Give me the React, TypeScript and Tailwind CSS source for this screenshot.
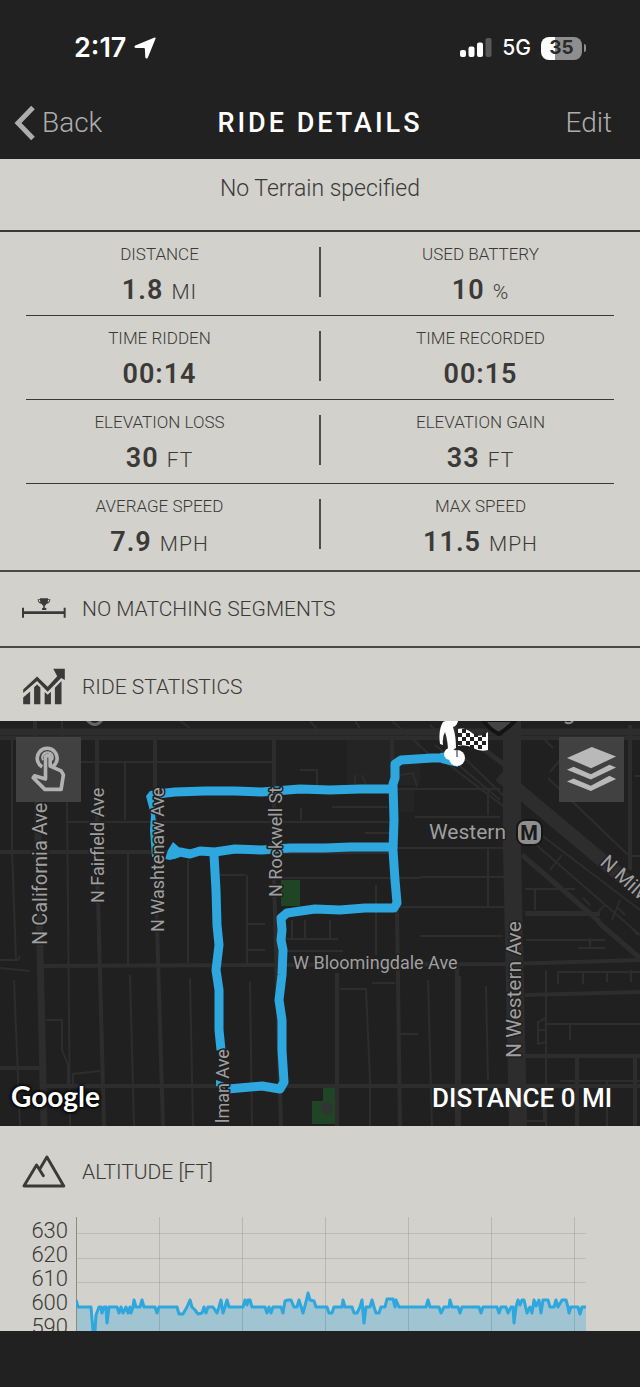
import React from "react";

type Stat = {
  label: string;
  value: string;
  unit?: string;
};

const statRows: Stat[][] = [
  [
    { label: "DISTANCE", value: "1.8", unit: "MI" },
    { label: "USED BATTERY", value: "10", unit: "%" },
  ],
  [
    { label: "TIME RIDDEN", value: "00:14" },
    { label: "TIME RECORDED", value: "00:15" },
  ],
  [
    { label: "ELEVATION LOSS", value: "30", unit: "FT" },
    { label: "ELEVATION GAIN", value: "33", unit: "FT" },
  ],
  [
    { label: "AVERAGE SPEED", value: "7.9", unit: "MPH" },
    { label: "MAX SPEED", value: "11.5", unit: "MPH" },
  ],
];

const altitudeTicks = [630, 620, 610, 600, 590];

const altitudeLine =
  "76,1300 78,1307 91,1307 93,1331 95,1331 96,1315 99,1307 101,1307 102,1313 104,1307 106,1307 107,1323 109,1307 117,1307 119,1313 121,1307 123,1313 126,1307 128,1313 130,1307 131,1313 133,1307 134,1300 136,1307 140,1307 142,1300 144,1307 155,1307 157,1313 159,1307 177,1307 179,1314 183,1314 187,1307 190,1300 192,1307 195,1310 198,1314 202,1313 204,1307 206,1313 208,1307 213,1307 217,1313 219,1307 221,1300 223,1313 225,1307 227,1300 229,1307 243,1307 245,1300 247,1305 248,1300 250,1300 252,1307 265,1307 267,1313 269,1307 271,1313 273,1307 281,1307 283,1313 285,1301 288,1300 291,1300 294,1307 297,1307 299,1300 303,1313 306,1302 308,1293 310,1300 314,1301 316,1307 327,1307 329,1313 332,1313 334,1307 342,1307 343,1300 345,1307 352,1307 354,1313 357,1313 360,1307 362,1300 364,1323 366,1307 370,1307 372,1300 374,1307 376,1313 379,1313 381,1307 385,1307 387,1299 393,1299 395,1307 396,1300 399,1307 426,1307 428,1300 430,1307 439,1307 441,1313 444,1307 449,1307 450,1300 452,1307 458,1307 460,1313 462,1307 479,1307 481,1313 483,1307 497,1307 499,1313 501,1307 506,1307 508,1313 511,1307 513,1307 514,1323 516,1307 518,1300 520,1305 522,1300 524,1300 527,1313 530,1307 532,1313 534,1300 536,1306 539,1300 541,1313 543,1300 548,1300 550,1307 554,1307 556,1300 558,1307 562,1300 566,1300 568,1307 569,1313 571,1307 578,1307 580,1314 582,1307 586,1307";

const minorRoads = [
  "M12 738V850L16 960M14 980L20 1126M62 721V736M67 800L70 1126M125 761V820M68 822H390M80 762H272M128 852V965M130 975L134 1126M188 860V963M190 978L193 1126M0 960H18L20 956M0 968L30 971M46 1020H62V1050L68 1065V1085M73 1088V1074L100 1071",
  "M247 875V965M250 982L252 1126M212 875H245M280 878H420M248 924H265M248 950H265M292 920V938M305 920V938M330 920V938M280 939H338M285 951H343M300 770H317V785M301 808V820M332 807H388M365 833H390M376 885V955M460 976V1126M340 989H366L370 1080V1126M372 983H395M400 1034H418M428 980L432 1126M486 986L488 1080M420 936H503",
  "M395 789H500M415 817H500M395 848H505M420 877H505M488 790V815M488 848V906M395 907H505M525 889H575M525 912H590M535 890V910M526 940H605M578 948H605M590 938V947M546 970V1126M558 984V972H640M583 972V984M607 972V982M631 970V982M547 1024H640M570 1025V1040M546 1018L538 1022V1044L546 1042M538 1030H546M560 1081H640M607 1082V1126M526 1121H544V1085",
  "M540 735L553 748M550 772L560 760M548 778L628 855M435 745L500 800M430 725L508 800M440 758L640 910M525 835L640 935M550 870L562 855M590 905L583 898M612 920L620 900M625 915L618 908M638 935L632 928M605 905L598 912M640 856H630M635 776H640M400 775L413 773L417 787M355 775V784M362 775L366 785M392 721L430 755M310 721L318 730M355 721L360 728M180 721L190 728",
];

const midRoads = [
  "M0 852H390M40 966L505 964L640 960M0 1068H40M45 1086H640M97 738V860L104 1126M155 738V860L163 1126M274 738V880L281 1126M337 973V1126M392 738V780M397 910L400 1126M457 963V1126M525 995L640 992M525 1056H640M577 1056V1126M635 1056V1126M525 914H600M630 725V870M0 738H640M35 721V736",
];

const routes = [
  "M157 794L175 792L205 791L235 791L262 792L300 789L330 790L360 789H392",
  "M460 758L432 758L401 760L395 764L395 778L393 784L394 820L393 850L395 880L397 903L394 908L365 908L340 910L315 909L287 913L281 918L282 930L281 940L283 950L282 975L279 1000L282 1020V1050L284 1082L280 1089L262 1086L228 1089",
  "M172 855L180 852L190 854L200 851L215 852L235 849L262 850L290 848L325 848L350 847H392",
  "M214 855L216 890L217 925L219 945L216 970L219 990L219 1030L221 1050",
];

const roadLabels = [
  { text: "N California Ave", x: 47, y: 945, size: 20, rotate: -90 },
  { text: "N Fairfield Ave", x: 104, y: 903, size: 18, rotate: -90 },
  { text: "N Washtenaw Ave", x: 164, y: 932, size: 18, rotate: -90 },
  { text: "N Rockwell St", x: 282, y: 897, size: 18, rotate: -90 },
  { text: "lman Ave", x: 229, y: 1123, size: 18, rotate: -90 },
  { text: "N Western Ave", x: 521, y: 1058, size: 21, rotate: -90 },
  { text: "N Milwaukee Ave", x: 599, y: 864, size: 20, rotate: 42 },
  { text: "W Bloomingdale Ave", x: 293, y: 969, size: 18, rotate: 0 },
  { text: "Western", x: 429, y: 839, size: 21, rotate: 0 },
];

const StatusBar = () => {
  return (
    <div className="flex h-[96px] items-center justify-between pl-[74px] pr-[54px] font-['Inter',sans-serif] text-white">
      <div className="flex items-center gap-2">
        <span className="text-[27px] font-semibold leading-8">2:17</span>
        <svg viewBox="0 0 22 22" className="h-[22px] w-[22px]" fill="currentColor">
          <path d="M20 0.800Q22.200 0 21.400 2L13.800 20.700Q12.600 22.600 11.300 20.500L10.900 12Q10.800 11.200 10 11.100L1.600 10.900Q-0.800 10 1.300 8.600Z" />
        </svg>
      </div>
      <div className="flex items-center gap-2.5">
        <svg viewBox="0 0 32 20" className="h-5 w-8" fill="currentColor">
          <rect x="0" y="12" width="6" height="7" rx="2" />
          <rect x="8.500" y="8.500" width="6" height="10.500" rx="2" />
          <rect x="17" y="4.500" width="6" height="14.500" rx="2" />
          <rect x="25.500" y="0" width="6" height="19" rx="2" opacity="0.250" />
        </svg>
        <span className="text-[21px] font-medium leading-6">5G</span>
        <div className="flex items-center gap-0.5">
          <div className="flex h-[23px] w-[41px] items-center justify-center rounded-lg bg-linear-to-r from-white from-35% to-[#8e8e8e] to-35% text-[19px] font-bold leading-5 text-[#2a2a2a]">
            35
          </div>
          <span className="h-2 w-0.5 rounded-r bg-[#8e8e8e]" />
        </div>
      </div>
    </div>
  );
};

const StatCell = ({ label, value, unit }: Stat) => {
  return (
    <div className="flex flex-1 flex-col items-center pt-2.5">
      <dt className="text-[17px] font-light leading-6">{label}</dt>
      <dd className="mt-2 flex items-baseline gap-2 leading-8">
        <span className="text-[27px] font-semibold tracking-[1px]">{value}</span>
        {unit && <span className="text-[21px] font-light tracking-[1px]">{unit}</span>}
      </dd>
    </div>
  );
};

const SegmentIcon = () => (
  <svg viewBox="66 109 132 66" className="h-[22px] w-11" fill="currentColor">
    <path d="M66 138H72V149H191V138H197V168H191V157H72V168H66Z" />
    <path
      d="M120 110H144V113H151Q151 125 140 126Q137 131 134.500 132V138L139 140V145H126V140L130 138V132Q127 131 124 126Q113 125 113 113H120ZM116 115Q116 121 121 122L120 115ZM148 115H144L143 122Q148 121 148 115Z"
      fillRule="evenodd"
    />
  </svg>
);

const StatisticsIcon = () => (
  <svg viewBox="66 322 132 112" className="h-[37px] w-11" fill="currentColor">
    <path d="M69 398V387L111 348L143 379L172 347L160 324H195V358L184 352L143 394L111 361Z" />
    <path d="M69 411L90 393V432H69ZM102 380L111 372L121 381V432H102ZM134 395L143 403L153 394V432H134ZM165 382L185 361V432H165Z" />
  </svg>
);

const MountainIcon = () => (
  <svg
    viewBox="64 104 136 102"
    className="h-[33px] w-11"
    fill="none"
    stroke="currentColor"
    strokeWidth="9"
    strokeLinecap="round"
    strokeLinejoin="round"
  >
    <path d="M119 147L141 110L193 200H70L109 135L130 168" />
  </svg>
);

const SectionTitle = ({ icon, title }: { icon: React.ReactNode; title: string }) => {
  return (
    <>
      <span className="flex w-11 items-center justify-center">{icon}</span>
      <h2 className="text-[21px] font-light leading-8">{title}</h2>
    </>
  );
};

const RideMap = () => {
  return (
    <section className="relative w-full overflow-hidden bg-[#202020]">
      <svg viewBox="0 721 640 405" className="block w-full font-['Roboto',sans-serif]">
        {/* Parks */}
        <path d="M281 880H300V906H281ZM312 1101H323V1088H338V1124H312Z" fill="#1f4526" />
        <circle cx="327" cy="1108" r="6" fill="#333333" />

        {/* Roads */}
        <path d="M347 738H420V785H347ZM393 790H414V812H393Z" fill="#242424" />
        <g fill="none" stroke="#2d2d2d">
          {minorRoads.map((d) => (
            <path key={d} d={d} strokeWidth="2" />
          ))}
          {midRoads.map((d) => (
            <path key={d} d={d} strokeWidth="4" />
          ))}
          <path d="M0 732H640" strokeWidth="7" />
          <path d="M38 800V860L44 1126" strokeWidth="7" />
          <path d="M512 721V850L518 1126" strokeWidth="18" />
          <path d="M500 775L640 892" strokeWidth="14" />
          <path d="M450 725L505 765M522 855L600 922M598 922L640 958" strokeWidth="5" />
        </g>

        <path d="M483 720H516Q508 728 499 734Q490 730 483 720Z" fill="#444444" stroke="#141414" strokeWidth="4" />
        <path d="M87 720Q95 729 102 720" fill="none" stroke="#666666" strokeWidth="3" />
        <path d="M565 722Q569 725 573 721" fill="none" stroke="#8b8b8b" strokeWidth="2" />

        {/* Ridden route */}
        <g fill="none" stroke="#2da7de" strokeWidth="9" strokeLinejoin="round">
          {routes.map((d) => (
            <path key={d} d={d} />
          ))}
        </g>
        <path
          d="M146 796L150 791L163 789V798L154 800L155 815L157 830L156 845L158 857H152L150 830L151 815ZM165 859L168 850L173 842L181 849L180 857L170 860ZM216 1080L225 1083V1089L216 1086ZM440 753L458 751V767L441 763Z"
          fill="#2da7de"
        />

        {roadLabels.map(({ text, x, y, size, rotate }) => (
          <text
            key={text}
            x={x}
            y={y}
            fontSize={size}
            transform={`rotate(${rotate} ${x} ${y})`}
            fill="#9f9f9f"
            stroke="#202020"
            strokeWidth="3"
            strokeLinejoin="round"
            paintOrder="stroke"
          >
            {text}
          </text>
        ))}

        {/* Metro station */}
        <rect x="517" y="820" width="25" height="25" rx="8" fill="#8f8f8f" stroke="#161616" strokeWidth="2" />
        <text x="529" y="840" fontSize="20" fontWeight="800" textAnchor="middle" fill="#1b1b1b">
          M
        </text>

        {/* Finish marker */}
        <path
          d="M443 722Q448 719 458 721Q457 726 453 727Q456 736 456 748L448 752Q448 741 445 732Q442 737 443 745L440 744Q438 730 443 722Z"
          fill="#ffffff"
        />
        <circle cx="450" cy="754" r="6" fill="#ffffff" />
        <circle cx="457" cy="758" r="8" fill="#ffffff" />
        <path d="M457 729V757" stroke="#222222" strokeWidth="1" />
        <path d="M458 729Q465 727 472 733T488 732V750Q480 752 473 748T458 746Z" fill="#ffffff" />
        <path
          d="M458 733H462V729H466V733H470V737H466V741H470V745H466V741H462V745H458V741H462V737H458ZM462 733V737H466V733ZM474 733H478V737H482V733H486V737H482V741H486V745H482V749H478V745H474V741H478V737H474ZM470 737H474V741H470ZM470 745H474V749H470ZM478 741H482V745H478Z"
          fill="#222222"
          fillRule="evenodd"
        />
      </svg>

      <button
        type="button"
        aria-label="Enable map interaction"
        className="absolute left-4 top-4 flex size-[65px] items-center justify-center bg-[#434343]/95 text-[#b2b2b2]"
      >
        <svg viewBox="0 0 196 196" className="size-full" fill="none" stroke="currentColor" strokeWidth="11" strokeLinejoin="round">
          <path d="M79 90A30 30 0 1 1 109 90" />
          <path d="M89 62V127L56 117L52 123L87 158H136L143 114L136 102L103 88V62Q103 56 96 56T89 62" />
          <path d="M81 70A16 16 0 1 1 109 70" strokeWidth="7" />
        </svg>
      </button>

      <button
        type="button"
        aria-label="Map layers"
        className="absolute right-4 top-4 flex size-[65px] items-center justify-center bg-[#434343]/95 text-[#b9b9b9]"
      >
        <svg viewBox="0 0 196 196" className="size-full" fill="currentColor">
          <path d="M24 63L99 30L172 59L97 94ZM24 99L44 90L96 112L152 84L172 92L96 128ZM24 134L44 125L96 147L152 117L172 127L96 163Z" />
        </svg>
      </button>

      <div className="absolute inset-x-0 bottom-2 flex items-start justify-between pl-[11px] pr-7 text-white">
        <span className="font-['Lato',sans-serif] text-[28px] font-bold leading-9 [text-shadow:0_0_3px_#000,0_0_3px_#000,0_0_4px_#000]">
          Google
        </span>
        <span className="text-[26px] font-medium leading-10">DISTANCE 0 MI</span>
      </div>
    </section>
  );
};

const AltitudeChart = () => {
  return (
    <div className="flex h-[114px] overflow-hidden pr-[54px]">
      <ul className="w-[76px] pr-2 pt-0.5 text-right text-[22px] font-light leading-6">
        {altitudeTicks.map((tick) => (
          <li key={tick}>{tick}</li>
        ))}
      </ul>
      <svg viewBox="76 1217 510 114" preserveAspectRatio="none" className="h-full min-w-0 flex-1">
        <path d="M76 1233.500H586M76 1258.500H586M76 1282.500H586" stroke="#bbbab6" />
        <polygon points={`76,1331 ${altitudeLine} 586,1331`} fill="#2da7de" fillOpacity="0.300" />
        <path
          d="M159.500 1217V1331M242.500 1217V1331M325.500 1217V1331M408.500 1217V1331M491.500 1217V1331M574.500 1217V1331"
          stroke="#000000"
          strokeOpacity="0.120"
        />
        <path d="M76.500 1217V1331" stroke="#8a8a87" />
        <polyline points={altitudeLine} fill="none" stroke="#2da7de" strokeWidth="3" strokeLinejoin="round" />
      </svg>
    </div>
  );
};

const App = () => {
  return (
    <div className="flex min-h-screen w-full flex-col bg-[#212121] font-['Roboto',sans-serif] text-[#3b3a38]">
      <header>
        <StatusBar />
        <nav className="grid h-[63px] grid-cols-[1fr_auto_1fr] items-center px-3.5 pb-[9px]">
          <button type="button" className="flex items-center gap-1.5 text-[28px] font-light leading-8 text-[#adadad]">
            <svg viewBox="0 0 22 36" className="h-9 w-[22px]" fill="none" stroke="currentColor" strokeWidth="5">
              <path d="M19 2.500L4 18L19 33.500" />
            </svg>
            Back
          </button>
          <h1 className="text-[27px] font-medium leading-8 tracking-[3px] text-white">RIDE DETAILS</h1>
          <button type="button" className="justify-self-end pr-3.5 text-[28px] font-light leading-8 text-[#adadad]">
            Edit
          </button>
        </nav>
      </header>

      <main className="bg-[#d2d1cc]">
        <p className="h-[73px] border-b-2 border-[#3b3a38] pt-3.5 text-center text-[23px] font-light leading-8">
          No Terrain specified
        </p>

        {/* Ride numbers */}
        <dl className="border-b-2 border-[#4a4947] px-[26px] pb-0.5">
          {statRows.map(([left, right]) => (
            <div
              key={left.label}
              className="flex h-[84px] border-b border-[#3b3a38] last:border-b-0"
            >
              <div className="flex flex-1 pr-[26px]">
                <StatCell {...left} />
              </div>
              <div className="mt-[15px] h-[50px] w-0.5 bg-[#4f4e4c]" />
              <div className="flex flex-1 pl-[26px]">
                <StatCell {...right} />
              </div>
            </div>
          ))}
        </dl>

        <section className="flex h-[76px] items-center gap-4 border-b-2 border-[#4a4947] px-[22px]">
          <SectionTitle icon={<SegmentIcon />} title="NO MATCHING SEGMENTS" />
        </section>
        <section className="flex h-[73px] items-center gap-4 px-[22px] pt-1">
          <SectionTitle icon={<StatisticsIcon />} title="RIDE STATISTICS" />
        </section>

        <RideMap />

        <section>
          <div className="flex h-[91px] items-center gap-4 px-[22px]">
            <SectionTitle icon={<MountainIcon />} title="ALTITUDE [FT]" />
          </div>
          <AltitudeChart />
        </section>
      </main>
      <footer className="h-14" />
    </div>
  );
};

export default App;
